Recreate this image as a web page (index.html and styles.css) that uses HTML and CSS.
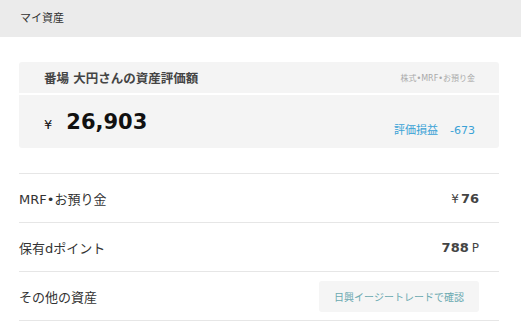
FILE: index.html
```html
<!DOCTYPE html>
<html lang="ja">

<head>
    <meta charset="UTF-8">
    <title>マイ資産</title>
    <link rel="stylesheet" href="styles.css">
</head>

<body>
    <div class="page-header">マイ資産</div>

    <div class="content">
        <div class="asset-card">
            <div class="asset-card-header">
                <span class="asset-card-title">番場 大円さんの資産評価額</span>
                <span class="asset-card-note">株式•MRF•お預り金</span>
            </div>
            <div class="asset-card-body">
                <div class="asset-total">
                    <span class="yen">¥</span>
                    <span class="total-amount">26,903</span>
                </div>
                <div class="profit">評価損益<span class="profit-value">-673</span></div>
            </div>
        </div>

        <ul class="asset-list">
            <li class="asset-row">
                <span>MRF•お預り金</span>
                <span class="asset-value"><span class="unit-yen">¥</span>76</span>
            </li>
            <li class="asset-row">
                <span>保有dポイント</span>
                <span class="asset-value">788<span class="unit-p">P</span></span>
            </li>
            <li class="asset-row">
                <span>その他の資産</span>
                <button class="check-button">日興イージートレードで確認</button>
            </li>
        </ul>
    </div>
</body>

</html>
```

FILE: styles.css
```css
body {
    margin: 0;
    font-family: "DejaVu Sans", "Noto Sans CJK JP", sans-serif;
    color: #333;
    background-color: #fff;
}

.page-header {
    height: 37px;
    line-height: 37px;
    padding-left: 20px;
    background-color: #ebebeb;
    font-size: 11px;
}

.content {
    padding: 25px 22px 0 19px;
}

.asset-card {
    background-color: #f4f4f4;
    border-radius: 3px;
}

.asset-card-header {
    display: flex;
    justify-content: space-between;
    align-items: center;
    height: 31px;
    padding: 0 24px 0 25px;
    border-bottom: 2px solid #fff;
}

.asset-card-title {
    font-size: 12.5px;
    font-weight: bold;
    color: #444;
}

.asset-card-note {
    font-size: 8px;
    color: #aaa;
}

.asset-card-body {
    display: flex;
    justify-content: space-between;
    align-items: center;
    height: 53px;
    padding: 0 24px 0 25px;
}

.asset-total {
    display: flex;
    align-items: baseline;
    margin-top: 1px;
}

.yen {
    font-size: 13px;
    margin-right: 14px;
    color: #111;
}

.total-amount {
    font-size: 21px;
    font-weight: bold;
    color: #111;
}

.profit {
    font-size: 11px;
    color: #3aa2d6;
    margin-top: 14px;
}

.profit-value {
    margin-left: 12px;
}

.asset-list {
    list-style: none;
    margin: 25px 0 0;
    padding: 0;
    border-top: 1px solid #e6e6e6;
}

.asset-row {
    display: flex;
    justify-content: space-between;
    align-items: center;
    height: 48px;
    padding-right: 20px;
    border-bottom: 1px solid #e6e6e6;
    font-size: 13px;
}

.asset-value {
    font-size: 13px;
    font-weight: bold;
    color: #444;
}

.unit-yen {
    font-weight: normal;
    font-size: 12px;
    margin-right: 2px;
}

.unit-p {
    font-weight: normal;
    font-size: 12px;
    margin-left: 3px;
}

.check-button {
    width: 160px;
    height: 31px;
    border: none;
    border-radius: 3px;
    background-color: #f5f5f5;
    color: #6aa9b0;
    font-family: inherit;
    font-size: 10px;
    cursor: pointer;
}
```
